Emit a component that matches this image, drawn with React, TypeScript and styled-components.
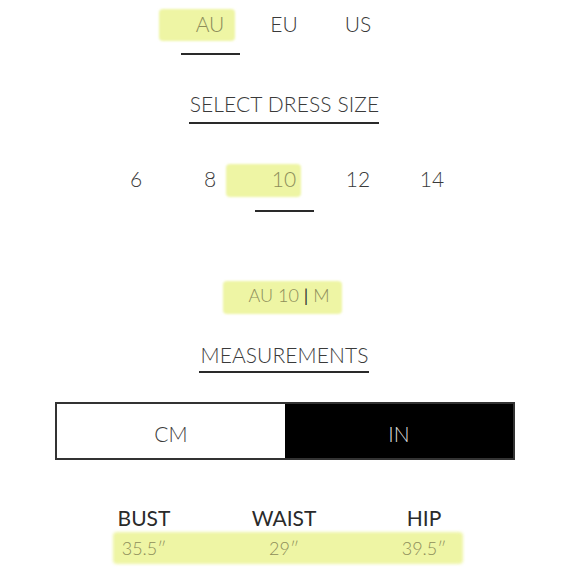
import React from "react";
import styled, { createGlobalStyle } from "styled-components";

const Global = createGlobalStyle`
  html, body { margin: 0; padding: 0; background: #fff; }
  body { font-family: Lato, "Open Sans", sans-serif; font-weight: 300; color: #333; }
`;

const Page = styled.div`
  width: 580px;
  height: 580px;
  box-sizing: border-box;
  padding-right: 12px;
  overflow: hidden;
  display: flex;
  flex-direction: column;
  align-items: center;
  background: #fff;
`;

const Row = styled.div<{ $top: number }>`
  display: flex;
  justify-content: center;
  margin-top: ${(p) => p.$top}px;
`;

const Item = styled.div`
  position: relative;
  width: 74px;
  display: flex;
  flex-direction: column;
  align-items: center;
  font-size: 21px;
  line-height: 25px;
  color: #3a3a3a;
`;

const Underline = styled.div<{ $gap: number; $on: boolean }>`
  width: 59px;
  height: 2px;
  margin-top: ${(p) => p.$gap}px;
  background: ${(p) => (p.$on ? "#2a2a2a" : "transparent")};
`;

const Mark = styled.span<{ $l: number; $r: number; $t: number; $b: number }>`
  position: relative;
  z-index: 0;
  &::before {
    content: "";
    position: absolute;
    z-index: -1;
    left: ${(p) => p.$l}px;
    right: ${(p) => p.$r}px;
    top: ${(p) => p.$t}px;
    bottom: ${(p) => p.$b}px;
    background: #eef5a4;
    border-radius: 4px;
    filter: blur(1.2px);
  }
`;

const Hi = styled.span`
  color: #8d8d5a;
`;

const Heading = styled.div<{ $top: number; $pad: number }>`
  margin-top: ${(p) => p.$top}px;
  font-size: 21px;
  line-height: 25px;
  letter-spacing: 0.1px;
  color: #3a3a3a;
  padding-bottom: ${(p) => p.$pad}px;
  border-bottom: 2px solid #2a2a2a;
  padding-left: 1px;
`;

const Summary = styled.div`
  margin-top: 72px;
  font-size: 18px;
  line-height: 22px;
  padding-left: 10px;
`;

const Pipe = styled.span`
  color: #333;
  font-weight: 400;
`;

const Toggle = styled.div`
  margin-top: 29px;
  width: 456px;
  height: 54px;
  display: flex;
  border: 2px solid #333;
  margin-left: 2px;
`;

const ToggleHalf = styled.div<{ $on: boolean }>`
  flex: 1 1 0;
  display: flex;
  align-items: center;
  justify-content: center;
  font-size: 21px;
  padding-top: 4px;
  box-sizing: border-box;
  background: ${(p) => (p.$on ? "#000" : "#fff")};
  color: ${(p) => (p.$on ? "#dcdcdc" : "#3a3a3a")};
`;

const Table = styled.div`
  margin-top: 45px;
  display: grid;
  grid-template-columns: 140px 140px 140px;
`;

const Label = styled.div`
  text-align: center;
  font-size: 21px;
  line-height: 25px;
  color: #2a2a2a;
  font-weight: 400;
`;

const ValuesRow = styled.div`
  grid-column: 1 / 4;
  display: grid;
  grid-template-columns: 140px 140px 140px;
  margin-top: 7px;
  position: relative;
  z-index: 0;
  &::before {
    content: "";
    position: absolute;
    z-index: -1;
    left: 39px;
    right: 31px;
    top: -5px;
    bottom: -5px;
    background: #eef5a4;
    border-radius: 4px;
    filter: blur(1.5px);
  }
`;

const Value = styled.div`
  text-align: center;
  font-size: 18px;
  line-height: 22px;
  color: #8d8d5a;
`;

export default function App() {
  const regions = ["AU", "EU", "US"];
  const sizes = ["6", "8", "10", "12", "14"];
  return (
    <Page>
      <Global />
      <Row $top={11}>
        {regions.map((r) => (
          <Item key={r}>
            {r === "AU" ? (
              <Mark $l={-37} $r={-11} $t={-2} $b={-5}>
                <Hi>{r}</Hi>
              </Mark>
            ) : (
              <span>{r}</span>
            )}
            <Underline $gap={17} $on={r === "AU"} />
          </Item>
        ))}
      </Row>
      <Heading $top={36} $pad={6}>SELECT DRESS SIZE</Heading>
      <Row $top={42}>
        {sizes.map((s) => (
          <Item key={s}>
            {s === "10" ? (
              <Mark $l={-46} $r={-5} $t={-2} $b={-6}>
                <Hi>{s}</Hi>
              </Mark>
            ) : (
              <span>{s}</span>
            )}
            <Underline $gap={19} $on={s === "10"} />
          </Item>
        ))}
      </Row>
      <Summary>
        <Mark $l={-25} $r={-12} $t={-3} $b={-8}>
          <Hi>AU 10 </Hi>
          <Pipe>|</Pipe>
          <Hi> M</Hi>
        </Mark>
      </Summary>
      <Heading $top={36} $pad={4}>MEASUREMENTS</Heading>
      <Toggle>
        <ToggleHalf $on={false}>CM</ToggleHalf>
        <ToggleHalf $on={true}>IN</ToggleHalf>
      </Toggle>
      <Table>
        <Label>BUST</Label>
        <Label>WAIST</Label>
        <Label>HIP</Label>
        <ValuesRow>
          <Value>35.5″</Value>
          <Value>29″</Value>
          <Value>39.5″</Value>
        </ValuesRow>
      </Table>
    </Page>
  );
}
